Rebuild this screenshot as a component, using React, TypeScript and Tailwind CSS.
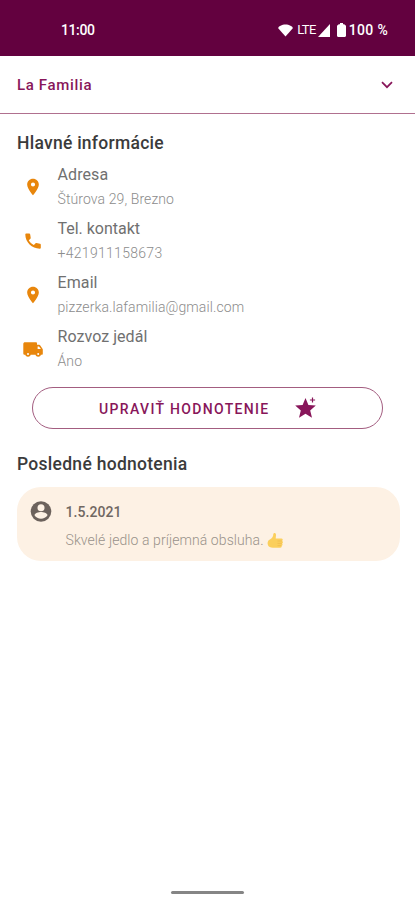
import React from "react";
import type { IconType } from "react-icons";
import { MdPlace } from "react-icons/md";

type InfoItem = {
  icon: IconType | typeof Truck;
  label: string;
  value: string;
  labelClass: string;
  valueClass: string;
};

const infoItems: InfoItem[] = [
  { icon: MdPlace, label: "Adresa", value: "Štúrova 29, Brezno", labelClass: "tracking-[0.1px]", valueClass: "tracking-[0.1px]" },
  { icon: Phone, label: "Tel. kontakt", value: "+421911158673", labelClass: "tracking-[-0.02px]", valueClass: "tracking-[0.3px]" },
  { icon: MdPlace, label: "Email", value: "pizzerka.lafamilia@gmail.com", labelClass: "tracking-[0.1px]", valueClass: "tracking-[0.1px]" },
  { icon: Truck, label: "Rozvoz jedál", value: "Áno", labelClass: "tracking-[0.05px]", valueClass: "tracking-[0.1px]" },
];

function Phone({ className }: { className?: string }) {
  return (
    <svg className={className} viewBox="0 0 20 20" fill="currentColor">
      <path d="M3.200 2.600h3c.6 0 .9.3 1 .8l.5 3.300c.1.400 0 .7-.3 1L5.800 9.200c1.200 2.100 2.700 3.600 5 4.800l1.600-1.600c.3-.3.6-.4 1-.3l3.600.7c.5.1.8.4.8.9v3.100c0 .6-.4.900-1 .900C8.900 17.600 2.300 11.300 2.300 3.600c0-.6.3-1 .9-1z" />
    </svg>
  );
}

function Truck({ className }: { className?: string }) {
  return (
    <svg className={className} viewBox="0 0 20 20" fill="currentColor">
      <path d="M2 3.300h10.800c.8 0 1.200.5 1.200 1.200v1.300h2.200c.4 0 .7.200.9.500l2.400 3.400c.2.300.3.500.3.800v4.300c0 .7-.4 1-1 1H1.700c-.8 0-1.400-.5-1.400-1.300V4.900c0-1 .7-1.600 1.700-1.600z" />
      <path d="M14.600 7.400h1.400l1.900 2.600h-3.300z" fill="white" />
      <circle cx="5" cy="15" r="2.700" />
      <circle cx="15.200" cy="15" r="2.700" />
      <circle cx="5" cy="15" r="1" fill="white" />
      <circle cx="15.200" cy="15" r="1" fill="white" />
    </svg>
  );
}

function StatusBar() {
  return (
    <header className="flex h-14 items-center bg-[#63013f] pt-1 pr-[27px] pl-[61px] text-white">
      <span className="text-[14px] leading-5 font-medium tracking-[-0.4px]">11:00</span>
      <div className="ml-auto flex items-center">
        <svg className="h-[13px] w-[15px]" viewBox="0 0 15 13" fill="currentColor">
          <path d="M7.500 12.600.2 4.200C.2 2.200 4 .4 7.500.4s7.300 1.800 7.300 3.800z" />
        </svg>
        <span className="ml-1 text-[13px] leading-5 tracking-[-0.6px]">LTE</span>
        <svg className="ml-[2px] h-[13px] w-[12px]" viewBox="0 0 12 13" fill="currentColor">
          <path d="M12 0v13H0z" />
        </svg>
        <svg className="ml-[7px] h-[14px] w-[9px]" viewBox="0 0 9 14" fill="currentColor">
          <path d="M3 0h3v1.200h1.200L9 2.700v10.100c0 .7-.5 1.200-1.200 1.200H1.200C.5 14 0 13.500 0 12.800V2.700l1.800-1.500H3z" />
        </svg>
        <span className="ml-[3px] text-[14px] leading-5 font-medium tracking-[0.3px]">100 %</span>
      </div>
    </header>
  );
}

function StarPlus() {
  return (
    <svg className="h-[22px] w-[22px]" viewBox="0 0 22 22" fill="currentColor">
      <path d="m10.500 1 2.900 6.900 7.400.6-5.600 4.900 1.800 7.400-6.500-4-6.500 4 1.800-7.400L.2 8.500l7.400-.6z" />
      <path d="M17.500 0v6M14.500 3h6" stroke="white" strokeWidth="2.200" />
      <path d="M17.500.4v5.200M14.900 3h5.200" stroke="currentColor" strokeWidth="1.200" />
    </svg>
  );
}

function Account() {
  return (
    <svg className="h-[25px] w-[25px]" viewBox="0 0 25 25">
      <circle cx="12" cy="12.500" r="10.300" fill="#6c625c" />
      <circle cx="12" cy="8.700" r="3.500" fill="#fdf1e4" />
      <path d="M5.500 16.300c0-2.300 4.200-3.400 6.500-3.400s6.500 1.100 6.500 3.400a7.800 7.800 0 0 1-13 0z" fill="#fdf1e4" />
    </svg>
  );
}

function ThumbUp() {
  return (
    <svg className="h-[17px] w-[17px]" viewBox="0 0 17 17">
      <path
        d="M7 1c1.500-.5 2.200.8 2 2.300L8.700 6.500h5.600c1.600 0 1.900 1.800.8 2.400 1.200.6 1 2.100 0 2.500.8.8.5 2-.5 2.300.4 1-.2 2-1.500 2H6c-2.500 0-4.500-.8-5.100-2.700-.8-2.500 0-4.800 2-5.600C5 6.500 6.400 4.500 6.300 2z"
        fill="#fbcf5c"
      />
      <path d="M10.500 9h4.300M10.500 11.400h4.300M10.500 13.600h3.700" stroke="#edb64b" strokeWidth=".6" />
    </svg>
  );
}

export default function App() {
  return (
    <div className="flex h-[900px] w-full flex-col bg-white font-['Roboto',sans-serif]">
      <StatusBar />

      <div className="flex h-[58px] items-center justify-between border-b border-b-[#b0708f] pr-[22px] pl-[17px] text-[#88165a]">
        <span className="text-[15px] leading-5 font-medium tracking-[0.65px]">La Familia</span>
        <svg className="h-2 w-3" viewBox="0 0 12 8" fill="none" stroke="currentColor" strokeWidth="1.700">
          <path d="m1 1.200 5 5 5-5" />
        </svg>
      </div>

      <main className="px-4 pt-[17px]">
        <h2 className="pl-px text-[17.5px] leading-6 font-medium tracking-[0.26px] text-[#3b3b3b]">Hlavné informácie</h2>

        <ul className="pt-[9px]">
          {infoItems.map(({ icon: Icon, label, value, labelClass, valueClass }) => (
            <li key={label} className="flex h-[54px]">
              <div className="flex w-[41px] justify-center pt-[13px] pr-2 text-[#e8860c]">
                <Icon className="h-5 w-5" />
              </div>
              <div className="pl-[0.5px]">
                <p className={`text-base leading-[22px] text-[#707070] ${labelClass}`}>{label}</p>
                <p className={`pt-[2px] text-[14px] leading-[22px] font-light text-[#8c8c8c] ${valueClass}`}>{value}</p>
              </div>
            </li>
          ))}
        </ul>

        <button className="mt-[7px] ml-4 flex h-[42px] w-[351px] items-center rounded-full border border-[#a35d80] pl-[66px] text-[#88165a]">
          <span className="w-[196px] pt-[2px] text-left text-[14px] font-medium tracking-[1.350px]">UPRAVIŤ HODNOTENIE</span>
          <StarPlus />
        </button>

        <h2 className="mt-[23px] pl-px text-[17.5px] leading-6 font-medium tracking-[0.28px] text-[#3b3b3b]">
          Posledné hodnotenia
        </h2>

        <article className="mt-[11px] mr-[-0.5px] ml-[0.5px] flex h-[74px] rounded-[24px] bg-[#fdf1e4] pt-3 pl-3">
          <Account />
          <div className="pl-3">
            <p className="text-[14px] leading-[26px] font-medium tracking-[0.05px] text-[#706762]">1.5.2021</p>
            <p className="flex items-center pt-[3px] text-[14px] leading-6 font-light text-[#99918a]">
              <span className="mr-[3px] tracking-[0.08px]">Skvelé jedlo a príjemná obsluha.</span>
              <ThumbUp />
            </p>
          </div>
        </article>
      </main>

      <div className="mx-auto mt-auto mb-[6px] h-[3px] w-[73px] rounded-full bg-[#858585]" />
    </div>
  );
}
